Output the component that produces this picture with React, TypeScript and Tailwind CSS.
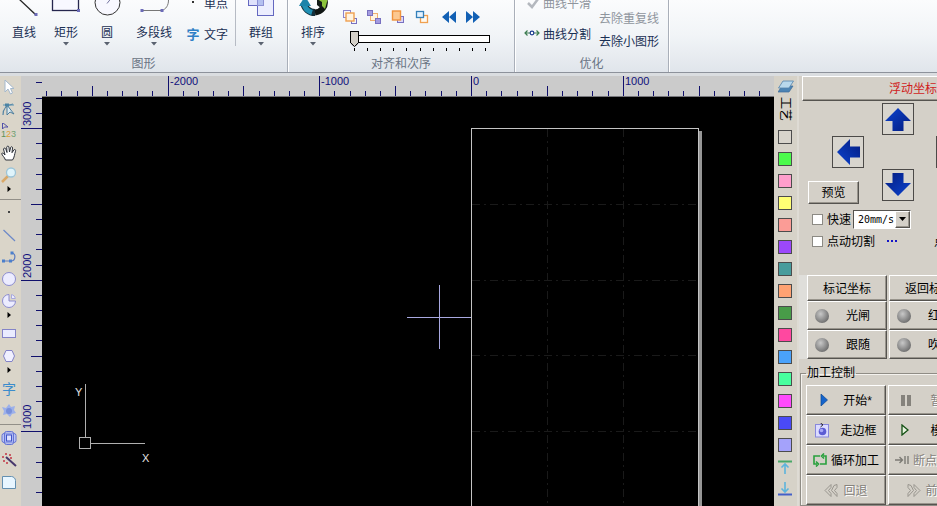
import { ReactNode } from "react";

const STEP = 15.17;

const swatches = [
  { name: "背景", cls: "bg-[#d8d4cc]" },
  { name: "绿色", cls: "bg-[#4cfa4c]" },
  { name: "粉色", cls: "bg-[#ff9ecc]" },
  { name: "黄色", cls: "bg-[#ffff74]" },
  { name: "浅红", cls: "bg-[#fb9c96]" },
  { name: "紫色", cls: "bg-[#9c48fb]" },
  { name: "青色", cls: "bg-[#489c9c]" },
  { name: "橙色", cls: "bg-[#ffa272]" },
  { name: "深绿", cls: "bg-[#489c48]" },
  { name: "玫红", cls: "bg-[#ff48a0]" },
  { name: "蓝色", cls: "bg-[#4aa2fb]" },
  { name: "薄荷", cls: "bg-[#48ff9e]" },
  { name: "洋红", cls: "bg-[#ff4afb]" },
  { name: "靛蓝", cls: "bg-[#4a4af6]" },
  { name: "淡紫", cls: "bg-[#a4a2fb]" },
];

/* ---------- ribbon ---------- */

function RibbonGroup({ title, width, children }: { title: string; width: string; children: ReactNode }) {
  return (
    <section
      aria-label={title}
      className={`flex h-full shrink-0 flex-col justify-end overflow-hidden border-r border-[#a9afb9] shadow-[1px_0_0_#fff] ${width}`}
    >
      <div className="flex items-end">{children}</div>
      <h2 className="mt-1 text-center leading-4 text-[#6a7484]">{title}</h2>
    </section>
  );
}

function BigTool({ label, width, caret = true, children }: { label: string; width: string; caret?: boolean; children: ReactNode }) {
  return (
    <button className={`flex shrink-0 flex-col items-center pb-1 ${width}`}>
      <svg width="32" height="32" viewBox="0 0 32 32" fill="none">
        {children}
      </svg>
      <span className="h-4 leading-[18px] whitespace-nowrap">{label}</span>
      <span className="flex h-2 items-center">
        {caret && (
          <svg width="6" height="4" viewBox="0 0 6 4">
            <path d="M0 0h6L3 3.5z" fill="#5a6270" />
          </svg>
        )}
      </span>
    </button>
  );
}

function Handle({ x, y }: { x: number; y: number }) {
  return <rect x={x - 1.5} y={y - 1.5} width="3" height="3" fill="#6c6cb8" />;
}

function OrderIcon({ label, children }: { label: string; children: ReactNode }) {
  return (
    <button aria-label={label} className="h-[14px] w-[14px]">
      <svg width="14" height="14" viewBox="0 0 14 14" fill="none">
        {children}
      </svg>
    </button>
  );
}

function Ribbon() {
  return (
    <header className="flex h-[73px] shrink-0 overflow-hidden border-b border-[#8d929b] bg-linear-to-b from-[#fbfcfd] via-[#f1f4f7] to-[#e0e5eb] text-[#1a3054]">
      <RibbonGroup title="图形" width="w-[288px]">
        <BigTool label="直线" width="ml-[2px] w-[44px]" caret={false}>
          <path d="M11 7L28 23" stroke="#222" strokeWidth="1.3" />
          <Handle x={28} y={22.5} />
        </BigTool>
        <BigTool label="矩形" width="w-10">
          <rect x="2.5" y="-4" width="26" height="22.5" fill="#f8f8ff" stroke="#26264e" strokeWidth="1.3" />
          <Handle x={28.5} y={18.5} />
        </BigTool>
        <BigTool label="圆" width="w-[42px]">
          <circle cx="16.5" cy="10.5" r="12.5" fill="#f8f8ff" stroke="#333" />
          <path d="M16 11.5l4-5" stroke="#7474a0" />
        </BigTool>
        <BigTool label="多段线" width="w-[52px]">
          <path d="M3 18.500H24C28 17 30.500 13.500 30.500 8" stroke="#777" />
          <Handle x={4} y={18.500} />
          <Handle x={24} y={18.500} />
        </BigTool>
        <div className="ml-[6px] flex flex-col pb-[2px]">
          <button className="flex h-[31px] items-center gap-[4px]">
            <svg width="14" height="14" viewBox="0 0 14 14">
              <rect x="6" y="4" width="2" height="2" fill="#333" />
            </svg>
            <span>单点</span>
          </button>
          <button className="flex h-[31px] items-center gap-[4px]">
            <b className="w-[14px] text-[13px] text-[#2f80c6]">字</b>
            <span>文字</span>
          </button>
        </div>
        <div className="mb-[6px] ml-[7px] h-[60px] w-px self-end bg-[#b6bbc4]" />
        <BigTool label="群组" width="ml-[2px] w-[46px]">
          <rect x="3.500" y="0" width="15" height="13.500" fill="#dfe2fb" stroke="#6468c0" />
          <rect x="12.500" y="6.500" width="16" height="17" fill="#eceefe" stroke="#6468c0" />
          <rect x="12.500" y="6.500" width="6" height="7" fill="#b4c0f0" stroke="#8c90d4" />
        </BigTool>
      </RibbonGroup>

      <RibbonGroup title="对齐和次序" width="w-[227px]">
        <BigTool label="排序" width="ml-px w-[48px]">
          <path d="M7 11A11 10 0 0 0 18 20.500" stroke="#14303c" strokeWidth="7" />
          <path d="M7 11A12 11 0 0 0 15 20.500" stroke="#2090b4" strokeWidth="5" />
          <path d="M2 14L14 14L8 4Z" fill="#1c84aa" />
          <path d="M18 20.500A11 10 0 0 0 27.500 8" stroke="#101614" strokeWidth="6" />
          <path d="M20 9L28 17L31 6L22 4Z" fill="#8cc43c" />
          <path d="M20 7L20 13L25 17L25 10Z" fill="#141c18" />
        </BigTool>
        <div className="ml-[6px] flex flex-col">
          <div className="flex items-center gap-[10px]">
            <OrderIcon label="置于前面">
              <rect x=".5" y=".5" width="7" height="7" stroke="#8c84cc" />
              <rect x="8.500" y="8.500" width="5" height="5" stroke="#7870c0" />
              <rect x="3" y="3" width="8" height="8" fill="#fff3e0" stroke="#f0a050" strokeWidth="1.4" />
            </OrderIcon>
            <OrderIcon label="置于后面">
              <rect x="3.500" y="3.500" width="7" height="7" fill="#fff3e0" stroke="#f0b070" />
              <rect x=".5" y=".5" width="5" height="5" fill="#a49ce0" stroke="#7870c0" />
              <rect x="8.500" y="8.500" width="5" height="5" fill="#a49ce0" stroke="#7870c0" />
            </OrderIcon>
            <OrderIcon label="上移一层">
              <rect x="6.500" y="6.500" width="6" height="6" fill="#dcd8fa" stroke="#7870c0" />
              <rect x="1.500" y="1" width="8" height="9" fill="#fcc890" stroke="#f0923c" strokeWidth="1.400" />
            </OrderIcon>
            <OrderIcon label="下移一层">
              <rect x="5.500" y="5.500" width="7" height="7" fill="#fffaf0" stroke="#f0a050" strokeWidth="1.300" />
              <rect x="1.500" y="1.500" width="7" height="6" fill="#e4f3ff" stroke="#3480ba" strokeWidth="1.300" />
            </OrderIcon>
            <button aria-label="上一个" className="ml-[3px]">
              <svg width="14" height="12" viewBox="0 0 14 12">
                <path d="M7 0v12L0 6zM14 0v12L7 6z" fill="#1260b4" />
              </svg>
            </button>
            <button aria-label="下一个">
              <svg width="14" height="12" viewBox="0 0 14 12">
                <path d="M0 0v12l7-6zM7 0v12l7-6z" fill="#1260b4" />
              </svg>
            </button>
          </div>
          <input
            type="range"
            min="0"
            max="10"
            defaultValue="0"
            aria-label="次序"
            className="mt-[7px] ml-[7px] block h-4 w-[140px] appearance-none bg-transparent [&::-webkit-slider-runnable-track]:h-2 [&::-webkit-slider-runnable-track]:border [&::-webkit-slider-runnable-track]:border-black [&::-webkit-slider-runnable-track]:bg-white [&::-webkit-slider-thumb]:-mt-[5px] [&::-webkit-slider-thumb]:-ml-px [&::-webkit-slider-thumb]:h-[16px] [&::-webkit-slider-thumb]:w-[9px] [&::-webkit-slider-thumb]:appearance-none [&::-webkit-slider-thumb]:[background:linear-gradient(#d4d0c8,#d4d0c8)_1px_1px/7px_10px_no-repeat,conic-gradient(from_315deg_at_50%_100%,#d4d0c8_90deg,#000_0)_1px_11px/7px_4px_no-repeat,#000] [&::-webkit-slider-thumb]:[clip-path:polygon(0_0,100%_0,100%_72%,50%_100%,0_72%)]"
          />
          <svg width="140" height="5" viewBox="0 0 140 5" className="ml-[7px]" shapeRendering="crispEdges">
            {Array.from({ length: 11 }, (_, i) => (
              <rect key={i} x={Math.round(4 + i * 13.1)} y="1" width="1" height="3" fill="#000" />
            ))}
          </svg>
        </div>
      </RibbonGroup>

      <RibbonGroup title="优化" width="w-[154px]">
        <div className="ml-[9px] flex flex-col pb-[2px]">
          <button disabled className="flex h-[31px] items-center gap-[3px] text-[#8f959d]">
            <svg width="16" height="14" viewBox="0 0 16 14" fill="none">
              <path d="M4 6l4 4 6-8" stroke="#b4b8be" strokeWidth="2.500" />
            </svg>
            <span>曲线平滑</span>
          </button>
          <button className="flex h-[31px] items-center gap-[3px]">
            <svg width="16" height="14" viewBox="0 0 16 14" fill="none" className="-mt-1">
              <path d="M1 7h5M3.500 4.500L1 7l2.500 2.500" stroke="#3c7c50" strokeWidth="1.200" />
              <path d="M10 7h5M12.500 4.500L15 7l-2.500 2.500" stroke="#3c7c50" strokeWidth="1.200" />
              <circle cx="8" cy="7" r="1.800" fill="#fff" stroke="#1c3c90" strokeWidth="1.200" />
            </svg>
            <span>曲线分割</span>
          </button>
        </div>
        <div className="ml-2 flex flex-col">
          <button disabled className="flex h-6 items-center text-[#8f959d]">去除重复线</button>
          <button className="flex h-[21px] items-center">去除小图形</button>
        </div>
      </RibbonGroup>
    </header>
  );
}

/* ---------- left tool strip ---------- */

function Tool({ label, children }: { label: string; children: ReactNode }) {
  return (
    <button aria-label={label} className="flex h-[22px] w-full shrink-0 items-center pl-px">
      <svg width="16" height="16" viewBox="0 0 16 16" fill="none">
        {children}
      </svg>
    </button>
  );
}

function Flyout() {
  return (
    <button aria-label="更多" className="flex h-[11px] w-full shrink-0 items-start pl-[7px]">
      <svg width="4" height="6" viewBox="0 0 4 6">
        <path d="M.5 0v6L4 3z" fill="#000" />
      </svg>
    </button>
  );
}

function ToolStrip() {
  return (
    <nav aria-label="绘图工具" className="flex w-[21px] shrink-0 flex-col bg-[#dad5c9]">
      <Tool label="选择">
        <path d="M4 1v12l3-3 2.500 5 2-1L9.500 9.500H13z" fill="#fff" stroke="#a4b8cc" />
      </Tool>
      <Tool label="节点编辑">
        <path d="M2 14C2 8 5 4 12 3" stroke="#5484a4" strokeWidth="1.200" />
        <path d="M6 4v10l3-3 4 2z" fill="#d8e8f0" stroke="#4c7c9c" />
        <path d="M2 4h11" stroke="#5c94b4" />
        <rect x="4" y="2.500" width="4" height="3" fill="#4c84a4" />
      </Tool>
      <Tool label="排序编号">
        <path d="M1.500 -.5v6.500l2-2h3.500z" stroke="#5050a8" />
        <text x="0" y="14" fontSize="9" fontFamily="Liberation Sans">
          <tspan fill="#58905c">1</tspan>
          <tspan fill="#dca038">2</tspan>
          <tspan fill="#70a070">3</tspan>
        </text>
      </Tool>
      <Tool label="平移">
        <path
          d="M4.500 15C3.500 12 1 10.500 0.700 8.500C1.500 7.500 3 8.500 4 10L2.500 4C3 2.500 4.500 3 4.800 4.200L6 7.500L5.700 2.200C6 .8 7.600.8 7.900 2L8.500 7L9.700 2.300C10.200 1.300 11.600 1.600 11.500 3L11 7.700L13 4.800C14 4 15 5 14.500 6.200C13.500 9 13.500 12.500 11.500 15Z"
          fill="#fff"
          stroke="#2c3038"
        />
      </Tool>
      <Tool label="缩放">
        <path d="M1 15l6-6" stroke="#d8a868" strokeWidth="2.500" />
        <circle cx="10" cy="5.500" r="4.500" fill="#dff4fb" stroke="#9cc4d8" strokeWidth="1.300" />
      </Tool>
      <Flyout />
      <hr className="mt-[2px] mb-[2px] border-t border-[#928f88]" />
      <Tool label="点">
        <rect x="7" y="6" width="2" height="2" fill="#444" />
      </Tool>
      <Tool label="直线">
        <path d="M2.500 3l11.500 11" stroke="#6c88c8" strokeWidth="1.200" />
      </Tool>
      <Tool label="多段线">
        <path d="M2 12h8c5 0 5-8 1-8" stroke="#5c7cc0" strokeWidth="1.200" />
        <path d="M1 10.500h3v3H1zM8 10.500h3v3H8zM9.500 2.500h3v3h-3z" fill="#4c80cc" />
      </Tool>
      <Tool label="圆">
        <circle cx="8" cy="8" r="6.500" fill="#ececff" stroke="#8c8cd0" />
      </Tool>
      <Tool label="扇形">
        <path d="M8 1.500A6.500 6.500 0 1 0 14.500 8H8z" fill="#ececff" stroke="#8c8cd0" />
        <path d="M10.500 1.500c2 .5 3.500 2 3.800 4h-3.800z" fill="#ececff" stroke="#a8a8dc" />
      </Tool>
      <Flyout />
      <Tool label="矩形">
        <rect x="1.500" y="3.500" width="13" height="8" fill="#eaecff" stroke="#8484c8" />
      </Tool>
      <Tool label="多边形">
        <path d="M5 2.500h6L13.500 8l-2.500 5.500H5L2.500 8z" fill="#f0f0ff" stroke="#8484c8" />
      </Tool>
      <Flyout />
      <button aria-label="文字" className="flex h-[22px] shrink-0 items-center pl-[2px] text-[14px] leading-none text-[#3c8ccc]">
        字
      </button>
      <Tool label="图库">
        <path d="M8 1l2 3 4-1-1 4 2 3-4 1-2 3-3-3-4 1 1-4-2-4 4 1z" fill="#9cb0ea" />
        <circle cx="8" cy="8" r="3" fill="#7890dc" />
      </Tool>
      <hr className="mt-[2px] mb-[2px] border-t border-[#928f88]" />
      <Tool label="群组">
        <rect x="1" y="3.500" width="14" height="9" rx="2" fill="#bcc4f6" stroke="#6474d4" />
        <rect x="3.500" y="1.500" width="9" height="13" rx="2" fill="#a8b4f2" fillOpacity=".7" stroke="#6474d4" />
        <rect x="5.500" y="5" width="5" height="6" fill="#dce0ff" stroke="#4054c8" />
      </Tool>
      <Tool label="魔棒">
        <path d="M5 5l10 9" stroke="#48386c" strokeWidth="2" />
        <path d="M1 4h2v2H1zM4 1h2v2H4zM8 2h2v2H8zM2 8h2v2H2zM9 5h2v2H9zM5 10h2v2H5z" fill="#c85c64" />
      </Tool>
      <Tool label="倒角">
        <path d="M1.500 2.500h9c2 0 4 2 4 4v8h-13z" fill="#e8f6ff" stroke="#6490b0" />
      </Tool>
    </nav>
  );
}

/* ---------- rulers and drawing area ---------- */

function tickLength(k: number) {
  if (k % 10 === 0) return 20;
  return k % 5 === 0 ? 10 : 5;
}

function VerticalRuler() {
  const ticks = Array.from({ length: 60 }, (_, i) => i - 3);
  return (
    <svg className="h-full w-[21px] shrink-0 bg-[#cbcbcb]" shapeRendering="crispEdges" aria-label="垂直标尺">
      {ticks.map((k) => (
        <rect key={k} x={20 - tickLength(k)} y={Math.round(52 + k * STEP)} width={tickLength(k) + 1} height="1" fill="#10106c" />
      ))}
      {[3000, 2000, 1000].map((v, i) => (
        <text
          key={v}
          transform={`translate(10 ${Math.round(50 + i * 10 * STEP)}) rotate(-90)`}
          fontSize="11"
          fill="#10107c"
          className="font-['Liberation_Sans',sans-serif]"
        >
          {v}
        </text>
      ))}
    </svg>
  );
}

function HorizontalRuler() {
  const ticks = Array.from({ length: 130 }, (_, i) => i - 28);
  return (
    <svg className="h-[21px] w-full shrink-0 border-b border-[#77777c] bg-[#cbcbcb]" shapeRendering="crispEdges" aria-label="水平标尺">
      {ticks.map((k) => (
        <rect key={k} x={Math.round(429 + k * STEP)} y={20 - tickLength(k)} width="1" height={tickLength(k)} fill="#10106c" />
      ))}
      {[-2000, -1000, 0, 1000].map((v) => (
        <text
          key={v}
          x={Math.round(431 + (v / 100) * STEP)}
          y="9"
          fontSize="11"
          fill="#10107c"
          className="font-['Liberation_Sans',sans-serif]"
        >
          {v}
        </text>
      ))}
    </svg>
  );
}

function Drawing() {
  return (
    <svg className="min-h-0 w-full flex-1 bg-black" shapeRendering="crispEdges" aria-label="绘图区">
      <g stroke="#1a1a1a" strokeDasharray="8 4 2 4">
        {[505.5, 581.5].map((x) => (
          <line key={x} x1={x} x2={x} y1="32" y2="2000" />
        ))}
        {[107.5, 183.5, 258.5, 334.5, 410.5].map((y) => (
          <line key={y} x1="430" x2="656" y1={y} y2={y} />
        ))}
      </g>
      <rect x="657" y="34" width="3" height="2000" fill="#969696" />
      <rect x="429.5" y="31.5" width="227" height="2000" fill="none" stroke="#c4c4c4" />
      <path d="M365 220.5h64M397.5 188v64" stroke="#a8a8e0" />
      <g fill="none" stroke="#b0b0b0">
        <path d="M43.500 287v54M49 346.500h54" />
        <rect x="37.500" y="340.500" width="11" height="11" />
      </g>
      <g fill="#e4e4e4" fontSize="11" className="font-['Liberation_Sans',sans-serif]">
        <text x="33" y="299">Y</text>
        <text x="100" y="365">X</text>
      </g>
    </svg>
  );
}

/* ---------- layer colours ---------- */

function LayerStrip() {
  return (
    <nav aria-label="图层" className="flex w-[23px] shrink-0 flex-col items-start bg-[#d6d2c8] pl-1">
      <button aria-label="图层设置" className="flex h-[21px] items-center">
        <svg width="16" height="13" viewBox="0 0 16 13">
          <path d="M4 6h11l-4 6H0z" fill="#4c84b4" stroke="#3c6c98" strokeWidth=".7" />
          <path d="M5 1h10.500L11 8H.5z" fill="#b8d8ec" stroke="#5484ac" strokeWidth=".8" />
        </svg>
      </button>
      <button className="h-[24px] leading-[14px] text-black [text-orientation:sideways] [writing-mode:vertical-rl]">工艺</button>
      <div className="mt-[9px] flex flex-col gap-2">
        {swatches.map((s) => (
          <button key={s.name} aria-label={s.name} className={`h-[14px] w-[14px] border border-[#4c4c4c] ${s.cls}`} />
        ))}
      </div>
      <div className="mt-2 flex flex-col gap-2">
        <button aria-label="移到顶层">
          <svg width="14" height="14" viewBox="0 0 14 14" fill="none">
            <path d="M0 1.500h14" stroke="#48a868" strokeWidth="2" />
            <path d="M7 14V4M3.500 7.500L7 4l3.500 3.500" stroke="#5cb4dc" strokeWidth="1.600" />
          </svg>
        </button>
        <button aria-label="移到底层">
          <svg width="14" height="14" viewBox="0 0 14 14" fill="none">
            <path d="M0 12.500h14" stroke="#4460c8" strokeWidth="2" />
            <path d="M7 0v10M3.500 6.500L7 10l3.500-3.500" stroke="#5cb4dc" strokeWidth="1.600" />
          </svg>
        </button>
      </div>
    </nav>
  );
}

/* ---------- control panel ---------- */

const raised = "border border-t-white border-l-white border-r-[#55534f] border-b-[#55534f] shadow-[inset_-1px_-1px_0_#98948c] bg-[#d4d0c8]";

function ArrowButton({ label, turn, place }: { label: string; turn: number; place: string }) {
  return (
    <button aria-label={label} className={`flex h-8 w-8 items-center justify-center border border-[#4c4a48] bg-[#d8d5ce] ${place}`}>
      <svg width="28" height="28" viewBox="0 0 28 28">
        <defs>
          <linearGradient id={`arrow${turn}`} x1="0" y1="0" x2="1" y2="1">
            <stop offset="0" stopColor="#0c44d0" />
            <stop offset="1" stopColor="#041c80" />
          </linearGradient>
        </defs>
        <path d="M14 3L27 16H19.500V26H8.500V16H1Z" transform={`rotate(${turn} 14 14)`} fill={`url(#arrow${turn})`} />
      </svg>
    </button>
  );
}

function Ball() {
  return <span className="h-[14px] w-[14px] shrink-0 rounded-full bg-radial-[at_40%_35%] from-[#c8c8c8] via-[#8c8c8c] to-[#505050]" />;
}

function LampButton({ children }: { children: ReactNode }) {
  return (
    <button className={`flex h-[29px] w-[80px] items-center gap-[17px] pl-[7px] ${raised}`}>
      <Ball />
      <span className="pt-px">{children}</span>
    </button>
  );
}

function JobButton({ label, disabled = false, gap = "gap-2", children }: { label: string; disabled?: boolean; gap?: string; children: ReactNode }) {
  return (
    <button
      disabled={disabled}
      className={`flex h-[30px] w-[80px] items-center justify-center whitespace-nowrap ${gap} ${raised} ${disabled ? "text-[#85827c] [text-shadow:1px_1px_0_#fff]" : ""}`}
    >
      {children}
      <span className="pt-[2px]">{label}</span>
    </button>
  );
}

function ControlPanel() {
  return (
    <aside aria-label="控制面板" className="w-[140px] shrink-0 overflow-hidden border-l-2 border-[#dedbd4] bg-[#d4d0c8]">
      <div className="w-[228px] pl-[3px]">
        <button className={`h-[25px] w-[222px] pt-px text-[#d01c1c] ${raised}`}>浮动坐标</button>

        <div className="mt-[2px] ml-[6px] grid grid-cols-[24px_50px_54px_32px] grid-rows-[33px_33px_35px]">
          <ArrowButton label="上" turn={0} place="col-start-3 row-start-1" />
          <ArrowButton label="左" turn={-90} place="col-start-2 row-start-2" />
          <ArrowButton label="右" turn={90} place="col-start-4 row-start-2" />
          <ArrowButton label="下" turn={180} place="col-start-3 row-start-3" />
          <button className={`col-span-2 col-start-1 row-start-3 h-[23px] w-[51px] self-end pt-px ${raised}`}>预览</button>
        </div>

        <div className="mt-1 ml-[10px] flex h-[22px] items-center">
          <label className="flex items-center gap-1">
            <input type="checkbox" className="h-[11px] w-[11px] appearance-none border border-[#8c8a84] bg-white" />
            <span className="pt-[2px]">快速</span>
          </label>
          <div className="relative ml-[2px] h-[19px] w-[58px] border border-t-[#55534f] border-r-white border-b-white border-l-[#55534f] bg-white">
            <select aria-label="速度" className="h-full w-full appearance-none bg-transparent pl-1 font-['DejaVu_Sans_Mono',monospace] text-[10px] text-black">
              <option>20mm/s</option>
            </select>
            <span className={`pointer-events-none absolute inset-y-0 right-0 flex w-[15px] items-center justify-center ${raised}`}>
              <svg width="7" height="4" viewBox="0 0 7 4">
                <path d="M0 0h7L3.500 4z" fill="#000" />
              </svg>
            </span>
          </div>
        </div>
        <div className="ml-[10px] flex h-[22px] items-center">
          <label className="flex items-center gap-1">
            <input type="checkbox" className="h-[11px] w-[11px] appearance-none border border-[#8c8a84] bg-white" />
            <span className="pt-[2px]">点动切割</span>
          </label>
          <button aria-label="点动设置" className="ml-[11px]">
            <svg width="12" height="4" viewBox="0 0 12 4">
              <path d="M1 1h2v2H1zM5 1h2v2H5zM9 1h2v2H9z" fill="#1414c8" />
            </svg>
          </button>
          <span className="ml-[36px] pt-[2px]">点动</span>
        </div>

        <div className="mt-[23px] ml-[5px] grid grid-cols-[80px_80px] gap-x-[2px] shadow-[-8px_0_0_#dfdeda]">
          <button className={`h-[26px] pt-[2px] ${raised}`}>标记坐标</button>
          <button className={`h-[26px] pt-[2px] ${raised}`}>返回标记</button>
          <LampButton>光闸</LampButton>
          <LampButton>红光</LampButton>
          <LampButton>跟随</LampButton>
          <LampButton>吹气</LampButton>
        </div>

        <fieldset className="mt-[5px] -ml-[2px] w-[226px] border border-[#8f8c85] pt-[5px] pl-[5px] shadow-[inset_1px_1px_0_#f4f2ee]">
          <legend className="px-px leading-[18px]">加工控制</legend>
          <div className="-mt-[2px] grid grid-cols-[80px_80px] gap-x-[2px]">
            <JobButton label="开始*" gap="gap-[15px]">
              <svg width="8" height="12" viewBox="0 0 8 12">
                <path d="M1 0l6.500 6L1 12z" fill="#1464cc" stroke="#0c4890" strokeWidth=".7" />
              </svg>
            </JobButton>
            <JobButton label="暂停" disabled gap="gap-[18px]">
              <svg width="11" height="11" viewBox="0 0 11 11">
                <path d="M0 0h4v11H0zM6 0h4v11H6z" fill="#85827c" />
              </svg>
            </JobButton>
            <JobButton label="走边框" gap="gap-[10px]">
              <svg width="15" height="15" viewBox="0 0 15 15" fill="none">
                <rect x=".5" y="1.500" width="13" height="12.500" fill="#dcdcff" stroke="#8888dc" />
                <circle cx="7.500" cy="8.500" r="3.800" fill="#5c5cd4" />
                <circle cx="6.500" cy="7.500" r="1.800" fill="#a8a8f8" />
                <path d="M5.500 0L8 1.800L5.500 4" stroke="#223" />
              </svg>
            </JobButton>
            <JobButton label="模拟" gap="gap-[21px]">
              <svg width="8" height="12" viewBox="0 0 8 12">
                <path d="M1 1l6 5-6 5z" fill="#e8f4e0" stroke="#145014" strokeWidth="1.300" />
              </svg>
            </JobButton>
            <JobButton label="循环加工" gap="gap-1">
              <svg width="14" height="14" viewBox="0 0 14 14" fill="none" stroke="#28a03c" strokeWidth="1.600">
                <path d="M5 3H1v8h3M3 8.500L5.500 11 3 13.500M9 11h4V3h-3M11 .5L8.500 3 11 5.500M5 3h2M7 11h2" />
              </svg>
            </JobButton>
            <JobButton label="断点继续" disabled gap="gap-1">
              <svg width="14" height="10" viewBox="0 0 14 10" fill="none" stroke="#7c7a74" strokeWidth="1.400">
                <path d="M0 5h7M4.500 2L7.500 5l-3 3M10 1v8M13 1v8" />
              </svg>
            </JobButton>
            <JobButton label="回退" disabled gap="gap-1">
              <svg width="15" height="13" viewBox="0 0 15 13" fill="none" stroke="#98958e">
                <path d="M7 .5v3L4.500 6.500 7 9.500v3L1 6.500zM10 1.500l3-1v3L10.500 6.500 13 9.500v3L7.500 6.500z" />
              </svg>
            </JobButton>
            <JobButton label="前进" disabled gap="gap-1">
              <svg width="15" height="13" viewBox="0 0 15 13" fill="none" stroke="#98958e">
                <path d="M8 .5v3l2.500 3L8 9.500v3l6-6zM5 1.500l-3-1v3L4.500 6.500 2 9.500v3L7.500 6.500z" />
              </svg>
            </JobButton>
          </div>
        </fieldset>
      </div>
    </aside>
  );
}

export default function App() {
  return (
    <div className="flex h-screen flex-col overflow-hidden bg-[#d4d0c8] font-['Liberation_Sans','Noto_Sans_CJK_SC',sans-serif] text-[12px] leading-4 text-black">
      <Ribbon />
      <main className="flex min-h-0 flex-1 border-t-3 border-[#dadde0]">
        <ToolStrip />
        <VerticalRuler />
        <div className="flex min-w-0 flex-1 flex-col">
          <HorizontalRuler />
          <Drawing />
        </div>
        <LayerStrip />
        <ControlPanel />
      </main>
    </div>
  );
}
